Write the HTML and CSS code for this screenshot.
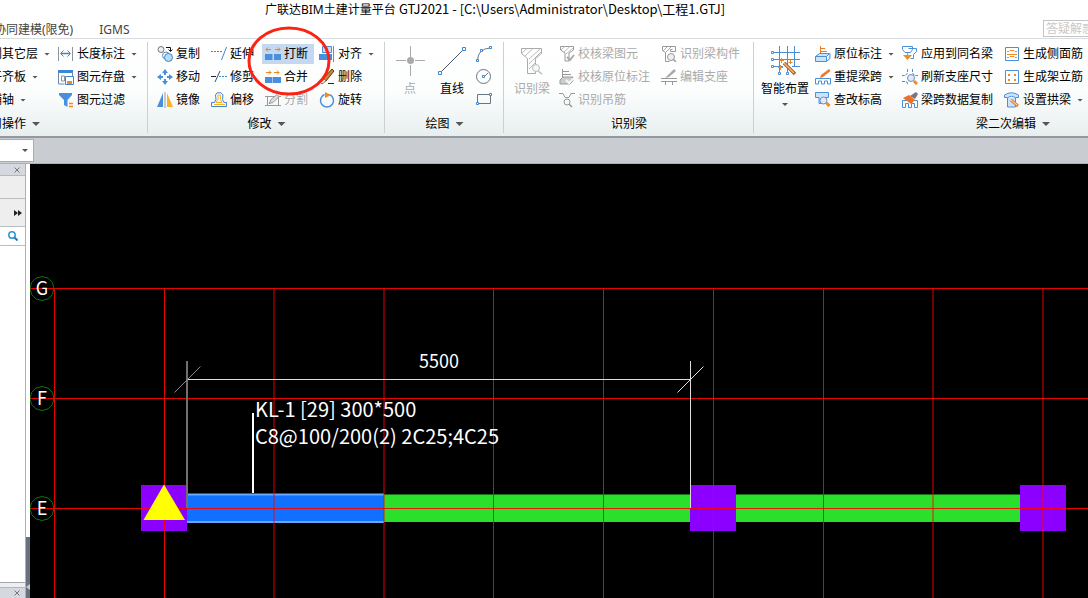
FILE: index.html
```
<!DOCTYPE html>
<html lang="zh-CN">
<head>
<meta charset="utf-8">
<title>广联达BIM土建计量平台 GTJ2021</title>
<link rel="stylesheet" href="styles.css">
</head>
<body>
<div class="app">
  <header class="titlebar"><h1 class="title">广联达BIM土建计量平台 <span class="title-file">GTJ2021 - [C:\Users\Administrator\Desktop\工程1.GTJ]</span></h1></header>
  <nav class="tabs">
    <a class="tab" href="#">协同建模(限免)</a>
    <a class="tab" href="#">IGMS</a>
    <input class="ask" type="text" placeholder="答疑解惑" aria-label="答疑解惑">
  </nav>

  <section class="ribbon">
    <div class="group group-common">
      <div class="tools">
        <div class="col">
          <button class="tool tool-text">复制到其它层<i class="caret"></i></button>
          <button class="tool tool-text">自动平齐板<i class="caret"></i></button>
          <button class="tool tool-text">两点辅轴<i class="caret"></i></button>
        </div>
        <div class="col">
          <button class="tool"><svg class="icon" viewBox="0 0 16 16"><path d="M.5 1v14M14.500 1v14" stroke="#8a95a0"/><path d="M3 7.500h9" stroke="#3d85d6" stroke-width="1.500"/><path d="M5.500 4.500l-3 3 3 3M9.500 4.500l3 3-3 3" stroke="#3d85d6"/></svg>长度标注<i class="caret"></i></button>
          <button class="tool"><svg class="icon" viewBox="0 0 16 16"><path d="M0 1h15v3H0z" fill="#3d85d6"/><path d="M.5 3v12h6M14.500 3v4" stroke="#6d8aa8"/><path d="M3.500 7v5h3V7z" stroke="#8a95a0"/><path d="M7.500 7.500h8v8h-8z" fill="#fff" stroke="#3d85d6"/><path d="M9 12h5v3H9z" fill="#f08a24"/></svg>图元存盘<i class="caret"></i></button>
          <button class="tool"><svg class="icon" viewBox="0 0 16 16"><path d="M1 1h13v2L9.500 8v7L6 13V8L1 3z" fill="#4a8fdc"/><path d="M11 11.500h4M11 14.500h4" stroke="#f08a24" stroke-width="1.500"/></svg>图元过滤</button>
        </div>
      </div>
      <div class="group-name">通用操作<i class="caret caret-big"></i></div>
    </div>

    <div class="group group-edit">
      <div class="tools">
        <div class="col">
          <button class="tool"><svg class="icon" viewBox="0 0 16 16"><circle cx="4" cy="3.500" r="3" fill="#eee" stroke="#777"/><circle cx="9" cy="9.500" r="3.500" fill="#fff" stroke="#4a8fc4"/><circle cx="11.500" cy="11.500" r="4" fill="#b9dcf5" stroke="#3d85c6"/><path d="M9 1.500h4.500V5M11.500 3.500l2 2 2-2" stroke="#111"/></svg>复制</button>
          <button class="tool"><svg class="icon" viewBox="0 0 16 16"><path d="M8 0l3 4H5zM8 16l3-4H5zM0 8l4-3v6zM16 8l-4-3v6z" fill="#4a8fdc"/><path d="M8 2v4M8 10v4M2 8h4M10 8h4" stroke="#4a8fdc" stroke-width="2"/></svg>移动</button>
          <button class="tool"><svg class="icon" viewBox="0 0 16 16"><path d="M6 1v14H0z" fill="#4a8fdc"/><path d="M10 1v14h6z" fill="#f9b125"/><path d="M8 0v16" stroke="#999"/></svg>镜像</button>
        </div>
        <div class="col">
          <button class="tool"><svg class="icon" viewBox="0 0 16 16"><path d="M0 5.500h12" stroke="#778" stroke-dasharray="2 1"/><path d="M15.500 1l-5 13" stroke="#3d85d6"/></svg>延伸</button>
          <button class="tool"><svg class="icon" viewBox="0 0 16 16"><path d="M0 7.500h5" stroke="#223"/><path d="M8 7.500h8" stroke="#3d85d6" stroke-dasharray="2 1"/><path d="M9 2L4 13" stroke="#357"/></svg>修剪</button>
          <button class="tool"><svg class="icon" viewBox="0 0 16 16"><path d="M.5 14.500v-4h3L5 7.500 4.500 3 6 .8h4L12 3l-.5 4.500 1.500 3h2.500v4z" stroke="#3d85d6"/><path d="M3 12.500h11M5 10.500l2-3V3h2.500v4.500l1.500 3z" stroke="#f9b125"/></svg>偏移</button>
        </div>
        <div class="col">
          <button class="tool is-active"><svg class="icon" viewBox="0 0 16 16"><path d="M0 8h7.500v6H0zM9 8h7v6H9z" fill="#4a8fdc"/><path d="M1 3.500h5M3 1.500L1 3.500l2 2M10 3.500h5M13 1.500l2 2-2 2" stroke="#e8861c"/></svg>打断</button>
          <button class="tool"><svg class="icon" viewBox="0 0 16 16"><path d="M0 8h16v6H0z" fill="#4a8fdc"/><path d="M7.500 8v6" stroke="#9cc4ef"/><path d="M1 3.500h5M4 1.500l2 2-2 2M9 3.500h5M12 1.500l2 2-2 2" stroke="#e8861c"/></svg>合并</button>
          <button class="tool" disabled><svg class="icon" viewBox="0 0 16 16"><path d="M0 4.500h9M13 4.500h3M2.500 5v8M13.500 5v8M0 13.500h16" stroke="#999"/><path d="M4 11.500l2-4 6-5 2 2-6 6z" fill="#ddd" stroke="#999"/></svg>分割</button>
        </div>
        <div class="col">
          <button class="tool"><svg class="icon" viewBox="0 0 16 16"><path d="M3.500.5h9v6h-9z" fill="#c8dcf5" stroke="#4a8fdc"/><path d="M0 8h13v6H0z" fill="#4a8fdc"/><path d="M14.500 0v16" stroke="#888"/></svg>对齐<i class="caret"></i></button>
          <button class="tool"><svg class="icon" viewBox="0 0 16 16"><path d="M13 0l2 2-8 10-3-2z" fill="#c9873a" stroke="#5c3a1a"/><path d="M4 9l3 3-4 3-2-2z" fill="#eee" stroke="#777"/><path d="M9 14.500h6" stroke="#222"/></svg>删除</button>
          <button class="tool"><svg class="icon" viewBox="0 0 16 16"><path d="M10.500 2.500a6.500 6.500 0 1 1-5 0" stroke="#4a8fdc" stroke-width="1.500"/><path d="M6 0l6 3-6 3z" fill="#f08a24"/></svg>旋转</button>
        </div>
      </div>
      <div class="group-name">修改<i class="caret caret-big"></i></div>
    </div>

    <div class="group group-draw">
      <div class="tools">
        <button class="big" disabled><svg class="icon-big" viewBox="0 0 30 30"><path d="M15.500 0v11M15.500 19v11M1 14.500h10M20 14.500h10" stroke="#aaa"/><circle cx="15.500" cy="14.500" r="3.500" fill="#aaa"/></svg>点</button>
        <button class="big"><svg class="icon-big" viewBox="0 0 30 30"><path d="M3 27L27 3" stroke="#456"/><path d="M1.500 25.500h3v3h-3zM25.500 1.500h3v3h-3z" fill="#fff" stroke="#3d85d6"/></svg>直线</button>
        <div class="col col-shapes">
          <button class="tool" aria-label="弧线"><svg class="icon" viewBox="0 0 16 16"><path d="M1.500 14Q2 3 14 2" stroke="#678"/><path d="M.5 13.500h2v2h-2zM4.500 3.500h2v2h-2zM13.500.5h2v2h-2z" fill="#fff" stroke="#3d85d6"/></svg></button>
          <button class="tool" aria-label="圆"><svg class="icon" viewBox="0 0 16 16"><circle cx="7.500" cy="7.500" r="7" stroke="#678"/><path d="M8 8l4-4" stroke="#678"/><path d="M6.500 6.500h2v2h-2z" fill="#fff" stroke="#3d85d6"/></svg></button>
          <button class="tool" aria-label="矩形"><svg class="icon" viewBox="0 0 16 16"><path d="M1.500 2.500h13v9h-13z" stroke="#678"/><path d="M.5 10.500h2v2h-2zM13.500 1.500h2v2h-2z" fill="#fff" stroke="#3d85d6"/></svg></button>
        </div>
      </div>
      <div class="group-name">绘图<i class="caret caret-big"></i></div>
    </div>

    <div class="group group-detect">
      <div class="tools">
        <button class="big" disabled><svg class="icon-big" viewBox="0 0 30 30"><path d="M4.500 2.500h20v5l-6 5v15h-8v-15l-6-5z" stroke="#aaa"/><path d="M5 7l5-4.500M8 10l8-7.500M12 13L23 3M12 18L24 6M12 23l7-7" stroke="#bbb"/><circle cx="19" cy="22" r="3.500" fill="#f6f8f8" stroke="#bbb"/><path d="M21 25l4 3" stroke="#bbb" stroke-width="1.500"/></svg>识别梁</button>
        <div class="col">
          <button class="tool" disabled><svg class="icon" viewBox="0 0 16 16"><path d="M1.500.5h13V4L10 7v8H6V7L1.500 4z" stroke="#999"/><path d="M2 4l4-3.500M5 6l6-5.500M7 8l7-6" stroke="#bbb"/><path d="M8 11l3 3 4-5" stroke="#aaa" stroke-width="2"/></svg>校核梁图元</button>
          <button class="tool" disabled><svg class="icon" viewBox="0 0 16 16"><path d="M3.500 8V0M4 2.500h6M4 5.500h8" stroke="#999"/><path d="M1 11l3-3h10v4l-3 3H1z" fill="#ccc" stroke="#999"/><path d="M7 11l3 3 5-5" stroke="#f7f7f7" stroke-width="2"/></svg>校核原位标注</button>
          <button class="tool" disabled><svg class="icon" viewBox="0 0 16 16"><path d="M0 1.500h4l2 4h4l2-4h4" stroke="#999"/><circle cx="8" cy="10" r="3" stroke="#999"/><path d="M10 12l3 3" stroke="#999" stroke-width="1.500"/></svg>识别吊筋</button>
        </div>
        <div class="col">
          <button class="tool" disabled><svg class="icon" viewBox="0 0 16 16"><path d="M1.500.5h13v5h-5v-2h2M1.500.5v4l3 2v9h4" stroke="#999"/><path d="M2 5l4-4M4 7l6-6" stroke="#aaa"/><circle cx="10" cy="11" r="3.500" fill="#eee" stroke="#999"/><path d="M12 13l3 3" stroke="#999" stroke-width="1.500"/></svg>识别梁构件</button>
          <button class="tool" disabled><svg class="icon" viewBox="0 0 16 16"><path d="M0 9.500h16M0 12.500h16M4.500 12v4M11.500 12v4" stroke="#999"/><path d="M13 0l2 2-7 6-4 1z" fill="#aaa"/></svg>编辑支座</button>
        </div>
      </div>
      <div class="group-name">识别梁</div>
    </div>

    <div class="group group-beam">
      <div class="tools">
        <button class="big"><svg class="icon-big" viewBox="0 0 30 30"><path d="M9.500 0v27M17.500 0v27M24.500 0v20M3 6.500h27M3 13.500h27M3 20.500h10M22 20.500h8" stroke="#4a8fdc"/><path d="M1.500 5.500h2v2h-2zM1.500 12.500h2v2h-2zM1.500 19.500h2v2h-2zM8.500 26.500h2v2h-2zM16.500 26.500h2v2h-2z" fill="#fff" stroke="#4a8fdc"/><path d="M14 17l11 11" stroke="#a8602c" stroke-width="3.500"/><path d="M14 17l10 10" stroke="#f2b877" stroke-width="1.500"/><path d="M11.500 12v5M9 14.500h5M20.500 14v4M18.500 16.500h4M10.500 19v5M8 21.500h5" stroke="#f08a24"/></svg>智能布置<i class="caret caret-under"></i></button>
        <div class="col">
          <button class="tool"><svg class="icon" viewBox="0 0 16 16"><path d="M5.500 7V0M5 2.500h5M5 5.500h7" stroke="#f07a24"/><path d="M.5 10.500l4-3h10l-3 3zM.5 10.500h11v5H.5zM11.500 15.500l3.500-3v-5" fill="#cfe3f8" stroke="#4a8fdc"/></svg>原位标注<i class="caret"></i></button>
          <button class="tool"><svg class="icon" viewBox="0 0 16 16"><path d="M.5 15V9.500h15V15h-3v-3h-3v3h-3v-3h-3v3z" fill="#fff" stroke="#4a8fdc"/><path d="M14 0l1.500 2L8 8 5 9l1-3z" fill="#f07a24"/></svg>重提梁跨<i class="caret"></i></button>
          <button class="tool"><svg class="icon" viewBox="0 0 16 16"><path d="M.5.5h13v5H11v6H4v-6H.5z" fill="#cfe3f8" stroke="#4a8fdc"/><circle cx="8.500" cy="8.500" r="3.500" fill="#dfe9f8" stroke="#6d8fc0"/><path d="M11.500 11l3 3" stroke="#f08a24" stroke-width="3"/></svg>查改标高</button>
        </div>
        <div class="col">
          <button class="tool"><svg class="icon" viewBox="0 0 16 16"><path d="M.5.500h10v3l-2 3H3l-2.500-3zM6.500 2.500h8v3l-3 3v4h-3" stroke="#4a8fdc"/><path d="M5.500 7v4" stroke="#f08a24"/><path d="M1 9h9l-4.500 5z" fill="#f08a24"/></svg>应用到同名梁</button>
          <button class="tool"><svg class="icon" viewBox="0 0 16 16"><path d="M5.500 0v4l-2 2.500H0M10.500 0v4l2 2.500H16M0 12.500h3l2.500 1V16" stroke="#4a8fdc" stroke-dasharray="3 1"/><circle cx="9" cy="9" r="3.500" fill="#dfe9f8" stroke="#6d8fc0"/><path d="M12 12l3 3" stroke="#f08a24" stroke-width="3"/></svg>刷新支座尺寸</button>
          <button class="tool"><svg class="icon" viewBox="0 0 16 16"><path d="M.5 15.500v-7h15v7h-3v-4h-3v4h-3v-4h-3v4z" fill="#fff" stroke="#4a8fdc"/><path d="M14 0l2 2-3 5-5-3z" fill="#777"/><path d="M7 3l6 5-4 4-8-6z" fill="#ef7025"/></svg>梁跨数据复制</button>
        </div>
        <div class="col">
          <button class="tool"><svg class="icon" viewBox="0 0 16 16"><path d="M1.500 1.500h13v13h-13z" fill="#fff" stroke="#4a8fdc"/><path d="M3 5.500h2l1-1h4l1 1h2M3 8.500h10M3 11.500h2l1-1h4l1 1h2" stroke="#f08a24"/></svg>生成侧面筋</button>
          <button class="tool"><svg class="icon" viewBox="0 0 16 16"><path d="M1.500 1.500h13v13h-13z" fill="#fff" stroke="#4a8fdc"/><path d="M4 5h2v2H4zM10 5h2v2h-2zM4 10h2v2H4zM10 10h2v2h-2z" fill="#f08a24"/></svg>生成架立筋</button>
          <button class="tool"><svg class="icon" viewBox="0 0 16 16"><path d="M.5 5.500V3Q7.500-1.500 14.500 3v2.500h-3Q7.500 3 3.500 5.500zM3.500 6v9h8V6" fill="#cfe3f8" stroke="#4a8fdc"/><path d="M7 8l7 6" stroke="#d98540" stroke-width="3"/><path d="M7 8l6 5" stroke="#ffe0b0"/></svg>设置拱梁<i class="caret"></i></button>
        </div>
      </div>
      <div class="group-name">梁二次编辑<i class="caret caret-big"></i></div>
    </div>

    <svg class="marker" viewBox="0 0 84 72"><ellipse cx="42" cy="36" rx="40" ry="33" fill="none" stroke="#fb2414" stroke-width="3"/></svg>
  </section>

  <div class="optionbar"><button class="combo" aria-label="楼层"><i class="caret"></i></button></div>

  <main class="workspace">
    <aside class="panel">
      <div class="panel-head"><button class="close" aria-label="关闭"><svg viewBox="0 0 6 6"><path d="M.5.5l5 5M5.500.5l-5 5"/></svg></button></div>
      <div class="panel-row row-blank"></div>
      <div class="panel-row row-more"><button class="more" aria-label="更多"><svg viewBox="0 0 8 6"><path d="M0 0l4 3-4 3zM4 0l4 3-4 3z" fill="#222"/></svg></button></div>
      <div class="panel-row row-search"><button class="search" aria-label="搜索"><svg viewBox="0 0 10 10"><circle cx="4" cy="4" r="3.200" fill="none" stroke="#2f94d4" stroke-width="1.500"/><path d="M6.500 6.500l3 3" stroke="#2878c0" stroke-width="2"/></svg></button></div>
      <div class="panel-list"></div>
      <div class="panel-head panel-head-low"><button class="close" aria-label="关闭"><svg viewBox="0 0 6 6"><path d="M.5.5l5 5M5.500.5l-5 5"/></svg></button></div>
    </aside>
    <div class="splitter"><div class="splitter-grip"><svg viewBox="0 0 4 6"><path d="M4 0v6L0 3z" fill="#c8ccd2"/></svg></div></div>
    <svg class="canvas" role="img" aria-label="梁平面图">
      <rect x="157" y="330" width="197" height="28" fill="#1070ff"/>
      <path d="M157 330.500h197M157 358h197" stroke="#6aa8ff" stroke-width="2"/>
      <rect x="354" y="330.500" width="636" height="27.500" fill="#2be02b"/>
      <g fill="#8b00ff"><rect x="111" y="321" width="46" height="46"/><rect x="660" y="321" width="46" height="46"/><rect x="990" y="321" width="46" height="46"/></g>
      <g stroke="#ff0000" stroke-opacity=".9">
        <path d="M0 124.500h2000M0 234.500h2000M0 344.500h2000"/>
        <path d="M24.500 124v1000M134.500 124v1000M244 124v1000M354 124v1000M463.500 124v1000M573.500 124v1000M683.500 124v1000M793.500 124v1000M903 124v1000M1013 124v1000"/>
      </g>
      <path d="M134 320.500L155 356h-41.500z" fill="#ff0"/>
      <path d="M157 197v147" stroke="#707070" stroke-width="2"/>
      <path d="M144.500 228.500l26-26" stroke="#888"/>
      <path d="M158 215.500h502.500M660.500 197v147M647.500 228.500l26-26" stroke="#ddd"/>
      <path d="M223 249v80" stroke="#fff" stroke-width="2"/>
      <g fill="none" stroke="#087808"><path id="bubble" d="M12 112.500l6 1.600 4.400 4.400 1.600 6-1.600 6-4.400 4.400-6 1.600-6-1.600-4.400-4.400-1.600-6 1.600-6L6 114.100z"/><use href="#bubble" y="110"/><use href="#bubble" y="220"/></g>
      <g class="axis"><text x="12" y="131">G</text><text x="12" y="241">F</text><text x="12" y="351">E</text></g>
      <text class="dim" x="389" y="204">5500</text>
      <g class="note"><text x="225" y="253">KL-1 [29] 300*500</text><text x="225" y="280">C8@100/200(2) 2C25;4C25</text></g>
    </svg>
  </main>
</div>
</body>
</html>
```

FILE: styles.css
```
* { box-sizing: border-box; }
body { margin: 0; background: #fff; color: #000; font: 12px/16px "Noto Sans", "Noto Sans CJK SC", sans-serif; }
button, input { font: inherit; color: inherit; }
button { margin: 0; padding: 0; border: 0; background: none; white-space: nowrap; }
.app { display: flex; flex-direction: column; height: 100vh; overflow: hidden; }

.titlebar { flex: none; height: 19px; padding-left: 265px; }
.title { margin: 0; font-size: 12px; line-height: 18px; font-weight: 400; white-space: nowrap; }
.title-file { font-family: "Noto Sans CJK SC", sans-serif; font-size: 13px; }

.tabs { flex: none; display: flex; align-items: center; gap: 26px; height: 19px; margin-left: -6px; }
.tab { color: #444; text-decoration: none; white-space: nowrap; line-height: 16px; padding-top: 2px; }
.ask { margin-left: auto; margin-right: -15px; width: 60px; height: 17px; padding: 0 2px; border: 1px solid #c4c4c4; background: #fff; }
.ask::placeholder { color: #c8c8c8; opacity: 1; }

.ribbon { position: relative; flex: none; display: flex; margin-left: -130px; height: 100px; border-top: 1px solid #d9dcde; border-bottom: 2px solid #92989d; background: linear-gradient(#fff, #fcfdfd 55%, #e8eeee); }
.group { position: relative; flex: none; display: flex; flex-direction: column; padding-top: 3px; }
.group::after { content: ""; position: absolute; right: 0; top: 3px; bottom: 3px; width: 1px; background: #cdd0d3; }
.tools { display: flex; height: 70px; }
.col { display: flex; flex-direction: column; gap: 3px; padding-top: 2px; }
.group-name { display: flex; align-items: center; justify-content: center; height: 24px; }
.group-common { width: 278px; }
.group-common .tools { padding-left: 96px; gap: 2px; }
.group-edit { width: 237px; }
.group-edit .tools { padding-left: 6px; gap: 2px; }
.group-draw { width: 119px; }
.group-draw .tools { padding-left: 10px; gap: 12px; }
.group-detect { width: 250px; }
.group-detect .tools { padding-left: 10px; gap: 2px; }
.group-detect .big { margin-right: 4px; }
.group-beam { width: 518px; }
.group-beam .tools { padding-left: 7px; gap: 2px; }
.group-beam .big { margin-right: 1px; }

.tool { display: flex; align-items: center; align-self: flex-start; height: 20px; padding: 0 6px 0 3px; }
.tool:has(.caret) { padding-right: 3px; }
.tool-text { padding-left: 0; }
.tool.is-active { background: #c5d8f1; }
.tool:disabled, .big:disabled { color: #aaa; }
.icon { flex: none; width: 16px; height: 16px; margin-right: 3px; fill: none; }
.col-shapes { margin-left: -6px; }
.col-shapes .icon { margin-right: 0; }
.big { display: flex; flex-direction: column; align-items: center; padding-top: 4px; }
.icon-big { width: 30px; height: 30px; margin-bottom: 5px; fill: none; }
.caret { flex: none; width: 6px; height: 3px; margin-left: 6px; background: #555; clip-path: polygon(0 0, 100% 0, 50% 100%); }
.caret-big { width: 8px; height: 4px; }
.caret-under { margin: 6px 0 0; }
.marker { position: absolute; left: 377px; top: -14px; width: 84px; height: 72px; pointer-events: none; }

.optionbar { flex: none; height: 26px; padding-top: 1px; background: #c9ccd1; border-bottom: 1px solid #aeb2b7; }
.combo { display: flex; align-items: center; justify-content: flex-end; width: 34px; height: 23px; padding-right: 5px; border: 1px solid #a9adb1; border-left: 0; background: #fff; }

.workspace { flex: 1; display: flex; min-height: 0; }
.panel { flex: none; display: flex; flex-direction: column; width: 26px; border-right: 1px solid #adb0b4; background: #eee; }
.panel-head { flex: none; display: flex; align-items: center; justify-content: flex-end; height: 12px; padding-right: 5px; background: #d6d8df; border-bottom: 1px solid #b5b8bd; }
.panel-head-low { height: 11px; margin-top: 4px; border-top: 1px solid #b5b8bd; border-bottom: 0; }
.close, .more, .search { display: flex; }
.close svg { width: 6px; height: 6px; fill: none; stroke: #777; }
.panel-row { flex: none; display: flex; align-items: center; justify-content: flex-end; border-bottom: 1px solid #b9bcc0; }
.row-blank { height: 23px; }
.row-more { height: 28px; padding-right: 3px; }
.more svg { width: 8px; height: 6px; }
.row-search { height: 19px; padding-right: 7px; background: #fff; }
.search svg { width: 10px; height: 10px; }
.panel-list { flex: 1; background: #fff; border-bottom: 1px solid #a5a8ac; }
.splitter { flex: none; display: flex; flex-direction: column; justify-content: flex-end; width: 4px; background: #fff; }
.splitter-grip { display: flex; flex-direction: column; justify-content: flex-end; height: 61px; padding-bottom: 8px; background: #68727d; }
.splitter-grip svg { width: 4px; height: 6px; }

.canvas { flex: 1; min-width: 0; height: 100%; background: #000; }
.canvas text { fill: #fff; font-family: "Noto Sans CJK SC", sans-serif; }
.axis { font-size: 18px; text-anchor: middle; }
.dim { font-size: 18px; }
.note { font-size: 20px; }
```
